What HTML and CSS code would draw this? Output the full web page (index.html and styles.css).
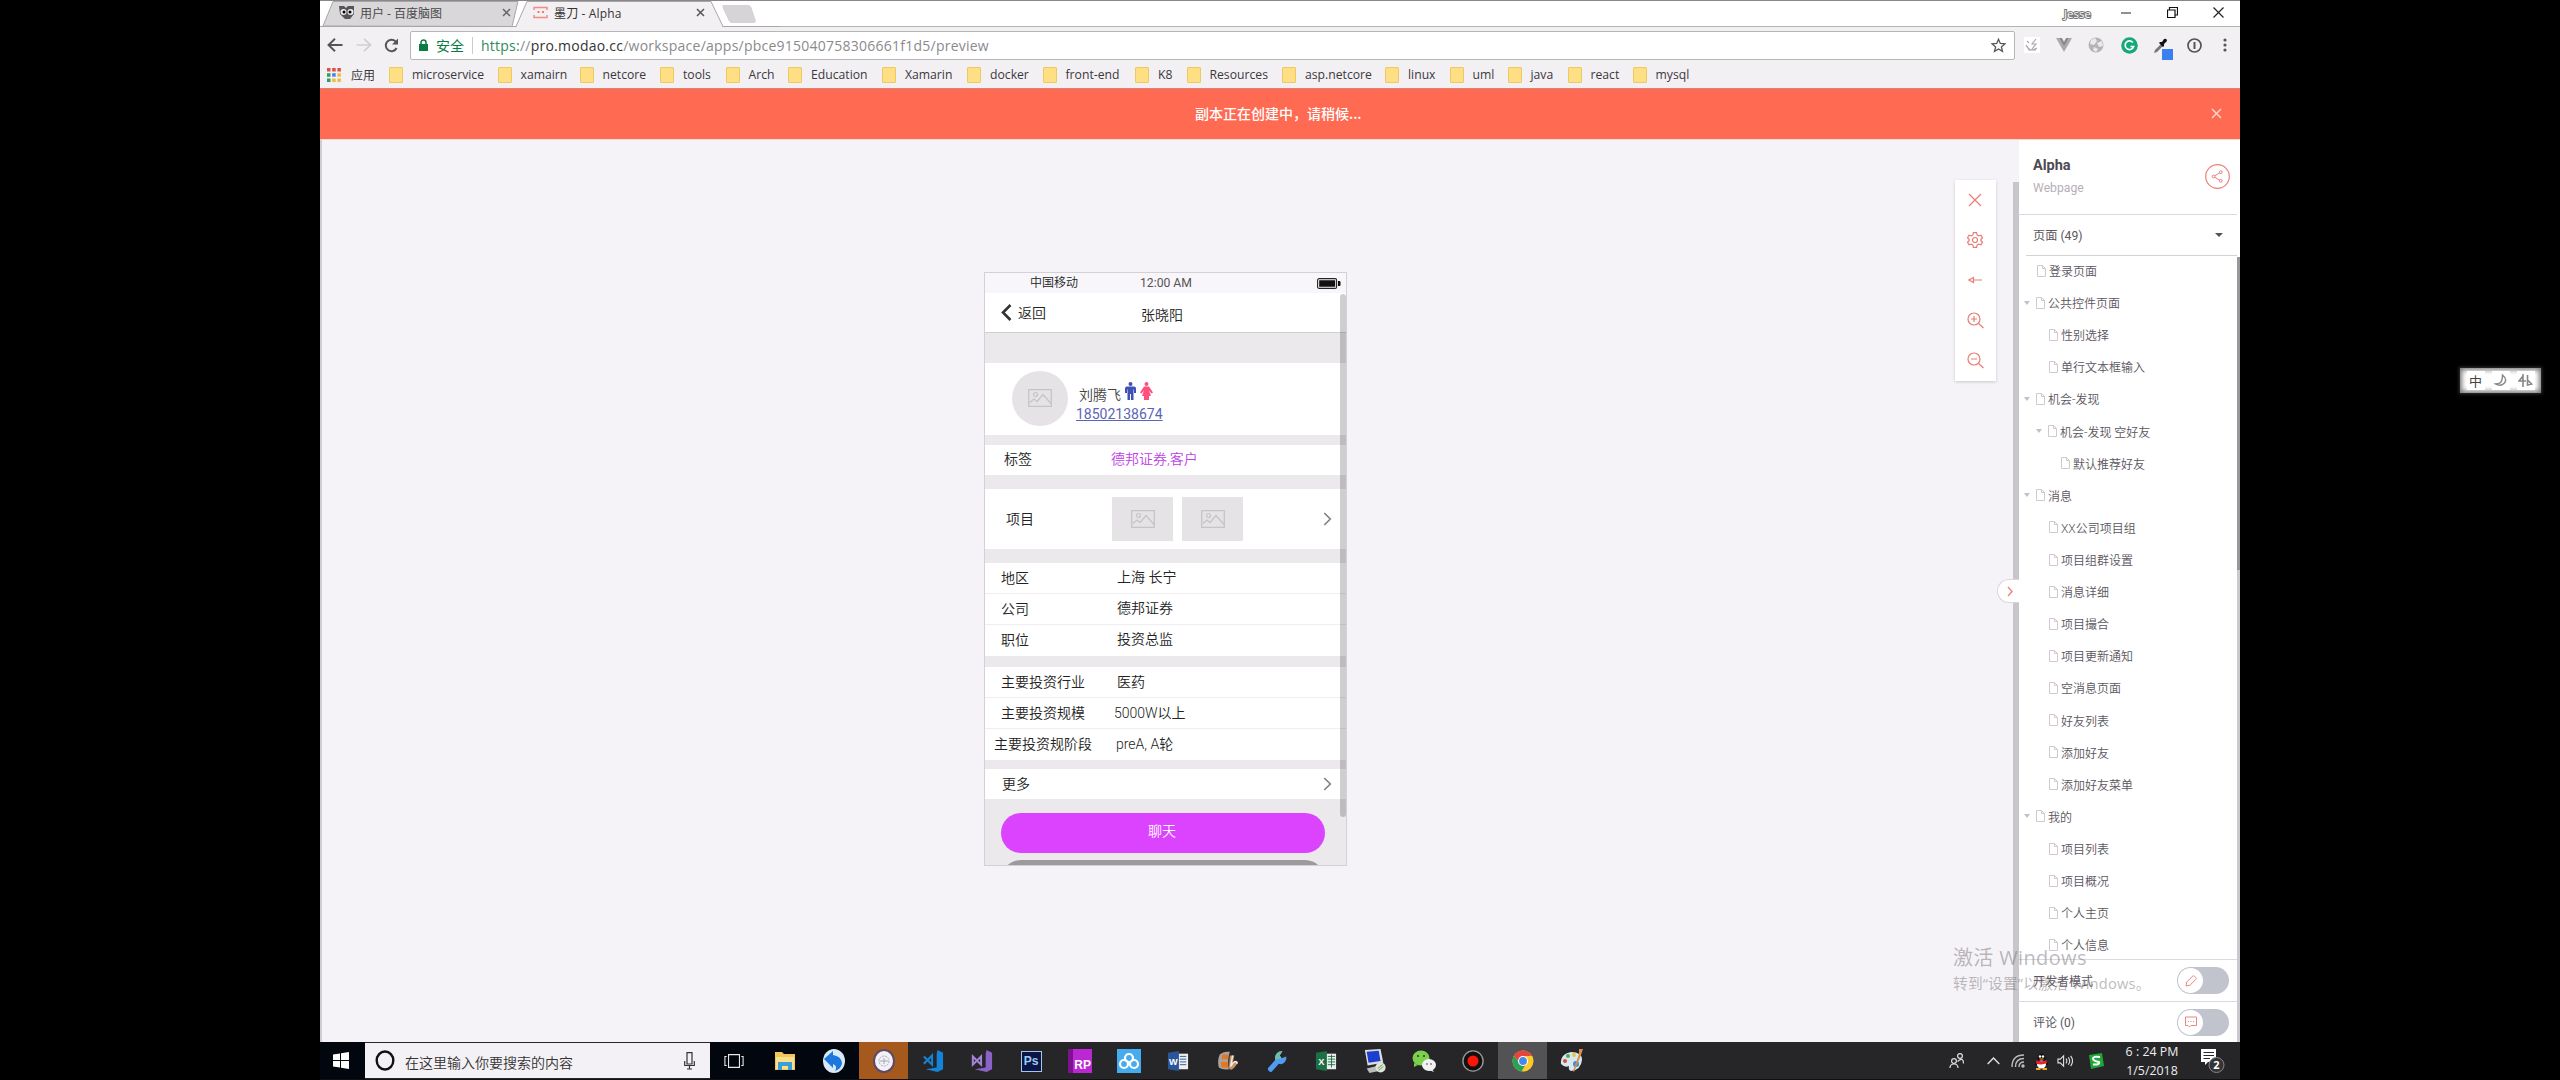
FILE: index.html
```html
<!DOCTYPE html>
<html lang="zh-CN">
<head>
<meta charset="utf-8">
<title>墨刀 - Alpha</title>
<link rel="stylesheet" href="styles.css">
</head>
<body>
<svg class="defs" width="0" height="0">
  <symbol id="page" viewBox="0 0 9 12"><path d="M.5.5h5l3 3v8h-8z M5.5.5v3h3" fill="none" stroke="#cfc9d2"/></symbol>
  <symbol id="pic" viewBox="0 0 24 18"><path d="M.7.7h22.6v16.6H.7z M2 13.500l4-3.500 3 2.500 6-7 8 9" fill="none" stroke="#c6c4c8" stroke-width="1.3"/><circle cx="7.500" cy="5.500" r="2" fill="none" stroke="#c6c4c8" stroke-width="1.2"/></symbol>
  <symbol id="next" viewBox="0 0 9 14"><path d="M1.3 1l6 6-6 6" fill="none" stroke="#807e83" stroke-width="1.6"/></symbol>
</svg>
<div class="desktop">
<div class="window">
  <header class="tabs">
    <svg class="tabshape" width="460" height="27" viewBox="0 0 460 27">
      <path d="M3 26L13 1.500h185l-6 25z" fill="#d9d7d9" stroke="#a8a6a9"/>
      <path d="M0 26.500h196L207 1.500h184l12 25h57V27H0z" fill="#f3f0f4" stroke="#a8a6a9"/>
      <path d="M197 26.500h205" stroke="#f3f0f4" stroke-width="1.500"/>
      <path d="M403 5.500h25q2 0 3 2l4 12q1 3-1 3h-22q-2 0-3-2l-6-13q0-2 0-2z" fill="#d6d4d6" stroke="#c6c4c7" stroke-width=".6"/>
    </svg>
    <div class="tab first">
      <svg width="16" height="15" viewBox="0 0 16 15"><path d="M0 1h5l2 2 2-2h6v8l-4 5H6L1 9z" fill="#555"/><circle cx="4.500" cy="7" r="3" fill="#eee"/><circle cx="11.500" cy="7" r="3" fill="#eee"/><circle cx="5" cy="7" r="1.500"/><circle cx="11" cy="7" r="1.500"/></svg>
      <span>用户 - 百度脑图</span>
      <svg class="tx" width="9" height="9" viewBox="0 0 9 9"><path d="M1 1l7 7M8 1L1 8" stroke="#666" stroke-width="1.500"/></svg>
    </div>
    <div class="tab second">
      <svg width="15" height="13" viewBox="0 0 15 13"><path d="M1 4V1.500h13V4M1 9v2.500h13V9" fill="none" stroke="#f18d85" stroke-width="1.500"/><path d="M4.500 6h2M9 6h2" stroke="#ef7b72" stroke-width="2"/></svg>
      <span>墨刀 - Alpha</span>
      <svg class="tx" width="9" height="9" viewBox="0 0 9 9"><path d="M1 1l7 7M8 1L1 8" stroke="#555" stroke-width="1.500"/></svg>
    </div>
    <div class="winctl">
      <span class="user">Jesse</span>
      <svg width="11" height="11" viewBox="0 0 11 11"><path d="M0 6h10" stroke="#222"/></svg>
      <svg width="11" height="11" viewBox="0 0 11 11"><path d="M.5 3h7.500v7.500H.5zM2.500 3V.5h8V8H8" fill="none" stroke="#111" stroke-width="1.200"/></svg>
      <svg width="11" height="11" viewBox="0 0 11 11"><path d="M.5.5l10 10M10.500.5l-10 10" stroke="#222" stroke-width="1.200"/></svg>
    </div>
  </header>
  <div class="address">
    <svg width="16" height="14" viewBox="0 0 16 14"><path d="M8 .8L1.500 7 8 13.200M2 7h13.500" fill="none" stroke="#555" stroke-width="1.900"/></svg>
    <svg class="fwd" width="16" height="14" viewBox="0 0 16 14"><path d="M8 .8L14.500 7 8 13.200M14 7H.5" fill="none" stroke="#d0ced1" stroke-width="1.700"/></svg>
    <svg class="reload" width="15" height="15" viewBox="0 0 15 15"><path d="M12.600 10A5.700 5.700 0 1 1 11.500 3.400" fill="none" stroke="#555" stroke-width="2"/><path d="M14 .5v6H8z" fill="#555"/></svg>
    <div class="omni">
      <svg width="9" height="12" viewBox="0 0 9 12"><path d="M0 5h9v7H0z" fill="#0b7a45"/><path d="M2 5V3.500a2.500 2.500 0 0 1 5 0V5" fill="none" stroke="#0b7a45" stroke-width="1.500"/></svg>
      <span class="safe">安全</span><i></i>
      <span class="url"><b>https:</b>//<em>pro.modao.cc</em>/workspace/apps/pbce915040758306661f1d5/preview</span>
      <svg class="star" width="15" height="15" viewBox="0 0 15 15"><path d="M7.500 1.300l1.800 4.200 4.600.4-3.500 3 1.100 4.500-4-2.400-4 2.400 1.100-4.500-3.500-3 4.600-.4z" fill="none" stroke="#555" stroke-width="1.300"/></svg>
    </div>
    <div class="exts">
      <svg width="16" height="16" viewBox="0 0 16 16"><path fill="#fff" d="M0 0h16v16H0z"/><path d="M2 8q4 8 11 3M3 4l2 2M12 2L8 7h4l-4 5M4 13h8" fill="none" stroke="#aaa" stroke-width="1.200"/></svg>
      <svg width="16" height="16" viewBox="0 0 16 16"><path d="M0 1h5l3 6 3-6h5L8 15z" fill="#aaa"/><path d="M3.500 1H6l2 4 2-4h2.500L8 9z" fill="#888"/></svg>
      <svg width="16" height="16" viewBox="0 0 16 16"><circle cx="8" cy="8" r="7.500" fill="#b5b3b6"/><path d="M3 3l4-2 2 3-3 4-4-1zM9 6l5-2 1 5-4 1zM6 10l4 2-2 3-3-2z" fill="#ebe9ec"/></svg>
      <svg width="17" height="17" viewBox="0 0 17 17"><circle cx="8.500" cy="8.500" r="8.300" fill="#15a878"/><path d="M11.800 5.500A4.300 4.300 0 1 0 12.600 9.500H9.500" fill="none" stroke="#fff" stroke-width="1.700"/></svg>
      <svg width="21" height="23" viewBox="0 0 21 23"><path d="M1 16l1-3 6-6 2 2-6 6z" fill="#777"/><path d="M7 5l2 0 2-3q3-1 3 2l-3 3v2l-1 1-4-4z" fill="#111"/><path d="M9 12h11v11H9z" fill="#3b7ff0"/></svg>
      <svg width="15" height="15" viewBox="0 0 15 15"><circle cx="7.500" cy="7.500" r="6.500" fill="none" stroke="#555" stroke-width="1.700"/><path d="M7.500 4v7" stroke="#555" stroke-width="2"/></svg>
      <svg width="4" height="14" viewBox="0 0 4 14"><circle cx="2" cy="2" r="1.600" fill="#555"/><circle cx="2" cy="7" r="1.600" fill="#555"/><circle cx="2" cy="12" r="1.600" fill="#555"/></svg>
    </div>
  </div>
  <nav class="marks">
    <span class="apps"><svg width="14" height="14" viewBox="0 0 14 14"><path d="M0 0h3.500v3.500H0zM5.200 0h3.500v3.500H5.200zM10.400 0h3.500v3.500h-3.500z" fill="#dd5145"/><path d="M0 5.200h3.500v3.500H0zM0 10.400h3.500v3.500H0z" fill="#2c9e60"/><path d="M5.200 5.200h3.500v3.500H5.200z" fill="#4486e8"/><path d="M10.400 5.200h3.500v3.500h-3.500zM5.200 10.400h3.500v3.500H5.200zM10.400 10.400h3.500v3.500h-3.500z" fill="#eebc3f"/></svg>应用</span>
    <span>microservice</span><span>xamairn</span><span>netcore</span><span>tools</span><span>Arch</span><span>Education</span><span>Xamarin</span><span>docker</span><span>front-end</span><span>K8</span><span>Resources</span><span>asp.netcore</span><span>linux</span><span>uml</span><span>java</span><span>react</span><span>mysql</span>
  </nav>
  <div class="notice"><span>副本正在创建中，请稍候...</span><svg width="11" height="11" viewBox="0 0 11 11"><path d="M1 1l9 9M10 1l-9 9" stroke="#ffd3ca" stroke-width="1.500"/></svg></div>
  <main class="work">
    <section class="canvas">
      <div class="phone">
        <div class="status"><span class="carrier">中国移动</span><span class="time">12:00 AM</span><svg width="24" height="11" viewBox="0 0 24 11"><rect x=".6" y=".6" width="19" height="9.800" rx="1.500" fill="none" stroke="#222" stroke-width="1.100"/><path d="M2.200 2.200h16v6.600h-16zM21 3h1.500q1 0 1 1v3q0 1-1 1H21z" fill="#111"/></svg></div>
        <div class="nav"><svg width="11" height="17" viewBox="0 0 11 17"><path d="M9.500 1L2 8.500 9.500 16" fill="none" stroke="#333" stroke-width="2.600"/></svg><span class="back">返回</span><span class="title">张晓阳</span></div>
        <div class="profile">
          <div class="avatar"><svg width="24" height="18"><use href="#pic"/></svg></div>
          <div class="who">
            <div class="name">刘腾飞
              <svg class="man" width="11" height="18" viewBox="0 0 11 18"><circle cx="5.500" cy="2" r="2" fill="#3f51b5"/><path d="M2 4.500h7q2 0 2 2V11H9V7.500h-.5V18H6v-6H5v6H2.500V7.500H2V11H0V6.500q0-2 2-2z" fill="#3f51b5"/></svg>
              <svg width="13" height="18" viewBox="0 0 13 18"><circle cx="6.500" cy="2" r="2" fill="#ff4f7d"/><path d="M4 4.500h5l4 6-1.500 1-2.500-3 2 5.500H9V18H4v-4H2l2-5.500-2.500 3L0 10.500z" fill="#ff4f7d"/></svg>
            </div>
            <span class="tel">18502138674</span>
          </div>
        </div>
        <div class="row tag"><span>标签</span><span>德邦证券,客户</span></div>
        <div class="row proj"><span>项目</span><div class="thumb"><svg width="24" height="18"><use href="#pic"/></svg></div><div class="thumb"><svg width="24" height="18"><use href="#pic"/></svg></div><svg class="go" width="9" height="14"><use href="#next"/></svg></div>
        <div class="group one">
          <div class="row"><span>地区</span><span>上海 长宁</span></div>
          <div class="row"><span>公司</span><span>德邦证券</span></div>
          <div class="row"><span>职位</span><span>投资总监</span></div>
        </div>
        <div class="group two">
          <div class="row"><span>主要投资行业</span><span>医药</span></div>
          <div class="row scale"><span>主要投资规模</span><span>5000W以上</span></div>
          <div class="row stage"><span>主要投资规阶段</span><span>preA, A轮</span></div>
        </div>
        <div class="row more"><span>更多</span><svg class="go" width="9" height="14"><use href="#next"/></svg></div>
        <div class="chat">聊天</div>
        <div class="second-btn"></div>
        <div class="pscroll"></div>
      </div>
      <div class="tools">
        <svg width="14" height="14" viewBox="0 0 14 14"><path d="M1 1l12 12M13 1L1 13"/></svg>
        <svg width="16" height="16" viewBox="0 0 16 16"><path d="M6.400.7h3.200l.5 2.200 1.600.9 2.200-.7 1.600 2.700L13.900 7.300v1.400l1.600 1.500-1.600 2.700-2.200-.7-1.600.9-.5 2.200H6.400l-.5-2.200-1.600-.9-2.200.7L.5 10.200l1.600-1.500V7.300L.5 5.800l1.600-2.700 2.200.7 1.600-.9z"/><circle cx="8" cy="8" r="2.500"/></svg>
        <svg width="14" height="8" viewBox="0 0 14 8"><path d="M5.500 1.500v5L1 4zM5.500 4H14"/></svg>
        <svg width="17" height="17" viewBox="0 0 17 17"><circle cx="7" cy="7" r="6"/><path d="M11.500 11.500l5 4.500M4 7h6M7 4v6"/></svg>
        <svg width="17" height="17" viewBox="0 0 17 17"><circle cx="7" cy="7" r="6"/><path d="M11.500 11.500l5 4.500M4 7h6"/></svg>
      </div>
      <div class="strip"></div>
      <div class="handle"><svg width="6" height="11" viewBox="0 0 6 11"><path d="M1 1l4 4.500L1 10" fill="none" stroke="#e98b86" stroke-width="1.500"/></svg></div>
    </section>
    <aside class="side">
      <div class="head"><div><h1>Alpha</h1><p>Webpage</p></div><svg width="25" height="25" viewBox="0 0 25 25" fill="none" stroke="#ea7f7a"><circle cx="12.500" cy="12.500" r="11.800" stroke-width="1.200"/><path d="M9.800 11.800l4.700-3M9.800 13.200l4.700 3"/><circle cx="8.500" cy="12.500" r="1.400"/><circle cx="15.800" cy="8.200" r="1.400"/><circle cx="15.800" cy="16.800" r="1.400"/></svg></div>
      <div class="pages"><span>页面 (49)</span><i></i></div>
      <ul class="tree">
        <li><svg><use href="#page"/></svg>登录页面</li>
        <li class="open"><svg><use href="#page"/></svg>公共控件页面</li>
        <li class="l1"><svg><use href="#page"/></svg>性别选择</li>
        <li class="l1"><svg><use href="#page"/></svg>单行文本框输入</li>
        <li class="open"><svg><use href="#page"/></svg>机会-发现</li>
        <li class="l1 open"><svg><use href="#page"/></svg>机会-发现 空好友</li>
        <li class="l2"><svg><use href="#page"/></svg>默认推荐好友</li>
        <li class="open"><svg><use href="#page"/></svg>消息</li>
        <li class="l1"><svg><use href="#page"/></svg>XX公司项目组</li>
        <li class="l1"><svg><use href="#page"/></svg>项目组群设置</li>
        <li class="l1"><svg><use href="#page"/></svg>消息详细</li>
        <li class="l1"><svg><use href="#page"/></svg>项目撮合</li>
        <li class="l1"><svg><use href="#page"/></svg>项目更新通知</li>
        <li class="l1"><svg><use href="#page"/></svg>空消息页面</li>
        <li class="l1"><svg><use href="#page"/></svg>好友列表</li>
        <li class="l1"><svg><use href="#page"/></svg>添加好友</li>
        <li class="l1"><svg><use href="#page"/></svg>添加好友菜单</li>
        <li class="open"><svg><use href="#page"/></svg>我的</li>
        <li class="l1"><svg><use href="#page"/></svg>项目列表</li>
        <li class="l1"><svg><use href="#page"/></svg>项目概况</li>
        <li class="l1"><svg><use href="#page"/></svg>个人主页</li>
        <li class="l1"><svg><use href="#page"/></svg>个人信息</li>
      </ul>
      <div class="opt"><span>开发者模式</span><div class="switch"><div><svg width="12" height="12" viewBox="0 0 12 12"><path d="M1 11l.8-4L7.500 1.200q1-.8 2 0l1.200 1.300q.8 1 0 2L5 10.200z" fill="none" stroke="#ea8580"/></svg></div></div></div>
      <div class="opt"><span>评论 (0)</span><div class="switch"><div><svg width="12" height="12" viewBox="0 0 12 12"><path d="M.5 1h11v8.500H6L4.500 11 3 9.500H.5z" fill="none" stroke="#ea8580"/><path d="M3 5.500h1M5.500 5.500h1M8 5.500h1" stroke="#ea8580"/></svg></div></div></div>
      <div class="sscroll"></div>
    </aside>
    <div class="watermark"><strong>激活 Windows</strong><span>转到“设置”以激活 Windows。</span></div>
  </main>
  <footer class="taskbar">
    <div class="start"><svg width="16" height="17" viewBox="0 0 16 17"><path d="M0 2.500l7-1V8H0zM8 1.300L16 0v8H8zM0 9h7v6.500l-7-1zM8 9h8v8l-8-1.300z" fill="#fff"/></svg></div>
    <div class="search"><svg width="20" height="21" viewBox="0 0 20 21"><ellipse cx="10" cy="10.500" rx="8.300" ry="9" fill="none" stroke="#111" stroke-width="2.400"/></svg><span>在这里输入你要搜索的内容</span><svg width="11" height="18" viewBox="0 0 11 18"><path d="M3 .7h5V12H3zM.7 9v4.500h9.600V9M5.500 13.500V17M3 17h5" fill="none" stroke="#333" stroke-width="1.200"/></svg></div>
    <div class="icons">
      <div><svg viewBox="0 0 22 22"><path d="M5 4h12v14H5zM3 6H1v10h2M19 6h2v10h-2" fill="none" stroke="#e8e8e8" stroke-width="1.200"/></svg></div>
      <div><svg viewBox="0 0 22 22"><path d="M1 2h7l2 2h11v16H1z" fill="#f1c65b"/><path d="M2 7h18v12H2z" fill="#fbe08b"/><path d="M4 20v-8h14v8h-4v-4H8v4z" fill="#3a9fd6"/></svg></div>
      <div><svg viewBox="0 0 22 24" preserveAspectRatio="none"><ellipse cx="11" cy="12" rx="11" ry="12" fill="#d8e9f8"/><path d="M1 10L10 2v4q8 1 9 8 0 5-7 8 3-5-2-7v4z" fill="#1c78dc"/></svg></div>
      <div class="hot"><svg viewBox="0 0 22 24"><ellipse cx="11" cy="12" rx="10" ry="11" fill="#f3f1f5" stroke="#5b4a6c" stroke-width="2"/><circle cx="11" cy="12" r="5" fill="none" stroke="#aab" stroke-dasharray="2 1"/><path d="M7 12h8M11 9v6" stroke="#9ab"/></svg></div>
      <div><svg viewBox="0 0 24 24"><path d="M17 0l6 3v18l-6 3L4 21l12-2V4z" fill="#1684d6"/><path d="M2 7l9 9V6l-9 9" fill="none" stroke="#1684d6" stroke-width="2.200"/></svg></div>
      <div><svg viewBox="0 0 24 24"><path d="M17 0l6 3v18l-6 3L4 21l12-2V4z" fill="#8a62c8"/><path d="M2 7v9l9-9v9z" fill="none" stroke="#a384d8" stroke-width="2.200"/></svg></div>
      <div><b class="ps">Ps</b></div>
      <div><b class="rp">RP</b></div>
      <div><svg class="wide" viewBox="0 0 24 24"><path d="M0 0h24v24H0z" fill="#45acf0"/><g fill="none" stroke="#fff" stroke-width="2.200"><circle cx="12" cy="9" r="4"/><circle cx="7" cy="15" r="4"/><circle cx="17" cy="15" r="4"/></g></svg></div>
      <div><svg viewBox="0 0 24 24"><path d="M12 4h11v17H12z" fill="#eee"/><path d="M14 7h7M14 10h7M14 13h7M14 16h7" stroke="#2a5699"/><path d="M1 3l12-2v22L1 21z" fill="#2a5699"/><text x="7" y="16" text-anchor="middle" class="gl">W</text></svg></div>
      <div><svg viewBox="0 0 24 24"><path d="M3 5q4-4 11-3-3 9-1 19-7 1-11-2-2-7 1-14z" fill="#a8a39c"/><path d="M6 5h6v5H5zM4 13h8v6H5z" fill="#e47722"/><path d="M14 6h5l-2 9q5-6 6-1l-4 5q-5 5-6 0z" fill="#c89461"/><path d="M17 6l-2 12q5-9 7-3" fill="none" stroke="#eee" stroke-width="1.500"/></svg></div>
      <div><svg viewBox="0 0 24 24"><path d="M2 20l8-9q-1-6 4-9l4-1-3 5 2 3 5-2q1 5-4 8-2 1-4 0l-8 9q-4 0-4-4z" fill="#4f9cf0"/><path d="M10 11q-1-6 4-9l4-1-3 5 2 3" fill="#6fbfa5"/></svg></div>
      <div><svg viewBox="0 0 24 24"><path d="M12 4h11v17H12z" fill="#eee"/><path d="M14 7h8M14 10h8M14 13h8M14 16h8M18 5v14" stroke="#1d7044"/><path d="M1 3l12-2v22L1 21z" fill="#1d7044"/><text x="7" y="16" text-anchor="middle" class="gl">X</text></svg></div>
      <div><svg class="wide" viewBox="0 0 24 26"><path d="M1 1l17-1 3 15-17 3z" fill="#ddd"/><path d="M3 3l13-1 2 11-13 2z" fill="#1c3fd2"/><path d="M3 21l13-3 4 5-14 3z" fill="#bbb"/><circle cx="18" cy="20" r="5.500" fill="#dfe3da"/><path d="M15 21l5-4M16 23l5-4" stroke="#56a545"/></svg></div>
      <div><svg class="wide" viewBox="0 0 24 24"><path d="M2 14l0 4 4-2z" fill="#7bd14b"/><ellipse cx="9" cy="9" rx="8.500" ry="7.500" fill="#7bd14b"/><ellipse cx="17" cy="16" rx="7" ry="6" fill="#f2f2f2"/><path d="M20 20l2 3-5-2z" fill="#f2f2f2"/><g fill="#333"><circle cx="6" cy="7" r="1"/><circle cx="12" cy="7" r="1"/><circle cx="15" cy="15" r=".8"/><circle cx="19" cy="15" r=".8"/></g></svg></div>
      <div><svg viewBox="0 0 24 24"><circle cx="12" cy="12" r="11" fill="#111" stroke="#999" stroke-width="1.500"/><circle cx="12" cy="12" r="6" fill="#fa1608"/></svg></div>
      <div class="active"><svg viewBox="0 0 24 24"><circle cx="12" cy="12" r="11.500" fill="#fbc92c"/><path d="M2 6.300A11.500 11.500 0 0 1 22 6.300L12 7 8 14z" fill="#e2473b"/><path d="M2 6.300a11.500 11.500 0 0 0 8.500 17l5-8.500L8 14z" fill="#2aa255"/><circle cx="12" cy="12" r="5.500" fill="#fff"/><circle cx="12" cy="12" r="4.300" fill="#4a86ee"/></svg></div>
      <div><svg class="wide" viewBox="0 0 24 24"><path d="M1 15Q0 5 11 3q11 0 11 8-1 10-11 11-3-1-2-5-4 2-8-2z" fill="#d8e6ee"/><circle cx="5" cy="12" r="2" fill="#d3503c"/><circle cx="8" cy="7" r="2" fill="#4cae50"/><circle cx="14" cy="6" r="2" fill="#e9c43e"/><circle cx="16" cy="15" r="3" fill="#3d8bd3"/><path d="M19 0h4l-2 6-7 17-1-1 6-17z" fill="#d6904a"/></svg></div>
    </div>
    <div class="tray">
      <svg width="16" height="16" viewBox="0 0 16 16" fill="none" stroke="#ddd" stroke-width="1.200"><circle cx="11" cy="3" r="2.400"/><circle cx="5" cy="8" r="2.400"/><path d="M1 15q0-4 4-4t4 4M8.500 8.500q6-5 6 2"/></svg>
      <svg width="13" height="8" viewBox="0 0 13 8"><path d="M.7 7l5.800-6 5.800 6" fill="none" stroke="#ddd" stroke-width="1.500"/></svg>
      <svg width="14" height="14" viewBox="0 0 14 14" fill="none" stroke="#bbb" stroke-width="1.400"><path d="M1 13Q1 1 13 1M4.500 13q0-8.500 8.500-8.500M8 13q0-5 5-5"/><circle cx="12" cy="12" r="1" fill="#fff"/></svg>
      <svg width="15" height="17" viewBox="0 0 15 17"><ellipse cx="7.500" cy="5.500" rx="4" ry="5" fill="#111"/><path d="M3 7L.5 12l2 0h10l2 0L12 7z" fill="#111"/><ellipse cx="7.500" cy="11.500" rx="4.500" ry="4" fill="#fff"/><path d="M2.500 7q5 2.500 10 0l.5 3q-5.500 2.500-11 .5z" fill="#e5202a"/><path d="M2 16h4.500M8.500 16H13" stroke="#f2a427" stroke-width="2"/><circle cx="6" cy="3.500" r="1.200" fill="#fff"/><circle cx="9" cy="3.500" r="1.200" fill="#fff"/><path d="M5.500 6h4" stroke="#f2a427"/></svg>
      <svg width="16" height="14" viewBox="0 0 17 14" fill="none" stroke="#ddd" stroke-width="1.200"><path d="M1 5h2.500L7 1.500v11L3.500 9H1zM9.500 4.500q2 2.500 0 5M12 3q3 4 0 8M14.500 1.500q4 5.500 0 11"/></svg>
      <svg width="16" height="16" viewBox="0 0 16 16"><path d="M1 2l13-2 2 13-13 3z" fill="#1fa63a"/><path d="M12 4Q5 3 5 5.500T11 9q1 3-6 2.500" fill="none" stroke="#fff" stroke-width="2"/></svg>
      <div class="clock"><span>6 : 24 PM</span><span>1/5/2018</span></div>
      <svg width="25" height="24" viewBox="0 0 25 24"><path d="M1 0h15v13H8l-3 3v-3H1z" fill="#fff"/><path d="M3.500 3.500H14M3.500 6.500H14M3.500 9.500H10" stroke="#262528" stroke-width="1.200"/><circle cx="16.500" cy="16" r="7.500" fill="#343336" stroke="#888"/><text x="16.500" y="20" text-anchor="middle" class="bd">2</text></svg>
    </div>
  </footer>
</div>
<div class="ime"><b>中</b><b><svg width="13" height="13" viewBox="0 0 13 13"><path d="M8.500 1q5 4 2 8-4 4-9 1 5 0 6-3 1-2 1-6z" fill="none" stroke="#888" stroke-width="1.400"/></svg></b><b><svg width="15" height="15" viewBox="0 0 15 15"><path d="M5 1v13M5 3L1 8h7M9.500 2v10l4-1-4-4" fill="none" stroke="#888" stroke-width="1.600"/></svg></b></div>
</div>
</body>
</html>
```
FILE: styles.css
```css
* { box-sizing: border-box; }
body { margin: 0; background: #000; font-family: "Open Sans", "Noto Sans CJK SC", sans-serif; font-size: 12px; }
svg { display: block; flex: none; }
.defs { position: absolute; }
.desktop { position: relative; width: 2560px; height: 1080px; overflow: hidden; padding-left: 320px; }
.window { width: 1920px; height: 1080px; display: flex; flex-direction: column; background: #f3f0f4; }

.tabs { position: relative; height: 27px; flex: none; background: #fff; border-top: 1px solid #888; border-bottom: 1px solid #b4b2b5; display: flex; align-items: center; }
.tabshape { position: absolute; left: 0; top: -1px; }
.tab { position: relative; display: flex; align-items: center; height: 25px; padding-bottom: 2px; color: #333; white-space: nowrap; }
.tab .tx { margin-left: auto; }
.tab.first { width: 172px; margin-left: 19px; gap: 5px; color: #4a4a4a; }
.tab.second { width: 172px; margin-left: 22px; gap: 6px; letter-spacing: .15px; }
.winctl { margin-left: auto; display: flex; align-items: center; margin-right: 16px; gap: 35px; height: 23px; padding-bottom: 2px; }
.user { font-size: 11.500px; color: #fff; -webkit-text-stroke: 2px #777; paint-order: stroke; margin-right: -5px; padding-top: 2px; }

.address { height: 34px; flex: none; display: flex; align-items: center; padding: 2px 0 0 7px; }
.fwd { margin-left: 13px; }
.reload { margin-left: 12px; margin-right: 11px; }
.omni { width: 1605px; flex: none; height: 29px; border: 1px solid #b7b5b8; border-radius: 2px; background: #fff; display: flex; align-items: center; padding: 0 13px 0 8px; font-size: 14px; white-space: nowrap; }
.safe { color: #0b7a45; margin-left: 8px; }
.omni i { width: 1px; height: 17px; background: #ccc; margin: 0 8px; }
.url { color: #8b898d; font-size: 14px; letter-spacing: .24px; }
.url b { font-weight: 400; color: #2f8a5b; }
.url em { font-style: normal; color: #333; }
.star { margin-left: auto; margin-right: -5px; }
.exts { flex: none; display: grid; grid-template-columns: 32px 32px 32px 34px 34px 28px 34px; justify-items: center; align-items: center; margin-left: 1px; }
.exts svg:nth-child(5) { margin-top: 6px; }

.marks { height: 27px; flex: none; display: grid; grid-template-columns: 62px 108.500px 82px 80.500px 65.500px 62.500px 94px 85px 75.500px 92.500px 51.500px 95.500px 103px 64.500px 58px 60px 65px 80px; align-items: center; padding-left: 7px; font-size: 12.200px; color: #3b383d; white-space: nowrap; }
.marks span { display: flex; align-items: center; gap: 9px; }
.marks span:not(.apps)::before { content: ""; width: 12px; height: 14px; background: #ffdf84; border: 1px solid #ecc962; border-radius: 1px; }
.marks .apps { font-size: 12px; gap: 10px; }

.notice { height: 51px; flex: none; background: #ff6a52; border-top: 1px solid #d98376; display: flex; align-items: center; justify-content: flex-end; padding: 0 18px 2px 0; color: #fff; font-size: 14px; font-weight: 500; font-family: "Noto Sans CJK SC", sans-serif; }
.notice span { margin-right: auto; margin-left: 875px; }

.work { position: relative; height: 903px; flex: none; display: flex; border-left: 2px solid #cfcdd1; border-top: 1px solid #f7d8d5; background: #f5f3f7; }
.canvas { position: relative; flex: 1; display: flex; align-items: flex-start; }
.phone { position: relative; width: 363px; height: 594px; margin: 132px 0 0 662px; border: 1px solid #d3d1d5; background: #ebe9ec; overflow: hidden; font-family: Roboto, "Noto Sans CJK SC", sans-serif; font-size: 14px; font-weight: 350; line-height: 20px; color: #222; display: flex; flex-direction: column; white-space: nowrap; }
.phone > div { flex: none; }
.status { height: 20px; background: #f8f6fa; display: flex; align-items: center; font-size: 12px; }
.carrier { margin-left: 45px; width: 110px; }
.time { color: #555; width: 177px; font-size: 12.200px; font-weight: 400; }
.nav { height: 40px; background: #fff; border-bottom: 1px solid #d0ced2; display: flex; align-items: center; padding-left: 16px; }
.back { margin-left: 6px; width: 123px; padding-top: 1px; }
.title { padding-top: 4px; }
.profile { height: 72px; margin-top: 30px; background: #fff; display: flex; align-items: center; padding-left: 27px; }
.avatar { width: 56px; height: 55px; border-radius: 50%; background: #e5e3e6; display: grid; place-items: center; margin-bottom: 2px; }
.who { margin-left: 8px; padding-top: 11px; }
.name { display: flex; align-items: center; padding-left: 3px; height: 18px; color: #444; }
.name svg { margin-bottom: 8px; }
.name .man { margin: 0 4px 8px 4px; }
.tel { display: block; color: #5a66b4; font-weight: 400; text-decoration: underline; line-height: 20px; }
.row { background: #fff; display: flex; align-items: center; height: 31px; border-bottom: 1px solid #efedf0; padding-left: 16px; }
.row span:first-child { width: 116px; }
.row.tag { margin-top: 10px; height: 30px; border: 0; padding-left: 19px; padding-bottom: 2px; }
.row.tag span:first-child { width: 107px; }
.row.tag span:last-child { color: #bd3fe6; }
.row.proj { margin-top: 14px; height: 60px; border: 0; padding-left: 21px; }
.row.proj span:first-child { width: 106px; }
.thumb { width: 61px; height: 44px; margin-right: 9px; background: #e5e3e6; display: grid; place-items: center; }
.go { margin-left: auto; margin-right: 14px; }
.group.one { margin-top: 14px; }
.group .row:last-child { border-bottom-color: #fff; }
.group.one span:last-child { padding-bottom: 3px; }
.group.two { margin-top: 11px; }
.scale span:last-child { margin-left: -3px; }
.row.stage { padding-left: 9px; }
.row.stage span:first-child { width: 122px; }
.row.more { margin-top: 9px; height: 30px; border: 0; padding-left: 17px; }
.chat { width: 324px; height: 40px; margin: 14px 0 0 16px; border-radius: 20px; background: #db43ff; color: #fff; display: grid; place-items: center; padding: 0 2px 5px 0; }
.second-btn { width: 324px; height: 40px; margin: 7px 0 0 16px; border-radius: 20px; background: #9c9a9d; }
.pscroll { position: absolute; right: 0; top: 21px; width: 6px; height: 523px; border-radius: 3px; background: rgba(60, 55, 65, .25); }

.tools { position: absolute; left: 1633px; top: 40px; width: 41px; height: 201px; background: #fff; box-shadow: 0 1px 3px rgba(0, 0, 0, .18); display: grid; grid-template-rows: repeat(5, 40px); place-items: center; padding-right: 1px; }
.tools svg { fill: none; stroke: #e87d76; stroke-width: 1.200; }
.strip { position: absolute; right: 0; top: 42px; bottom: 0; width: 6px; background: #c9c6cb; }
.handle { position: absolute; right: 0; top: 439px; width: 22px; height: 24px; border-radius: 12px 0 0 12px; background: #fff; border: 1px solid #dcd6dc; border-right: 0; display: grid; place-items: center; padding-left: 2px; }

.side { position: relative; width: 221px; height: 902px; background: #fff; font-family: Roboto, "Noto Sans CJK SC", sans-serif; color: #5b5660; display: flex; flex-direction: column; }
.head { height: 75px; flex: none; border-bottom: 1px solid #dcd9de; display: flex; justify-content: space-between; align-items: center; padding: 0 10px 2px 14px; }
.head h1 { margin: 0; font-size: 14.500px; line-height: 20px; color: #4d4a52; }
.head p { margin: 3px 0 0; line-height: 18px; color: #b5b0b8; font-size: 12.200px; }
.pages { height: 41px; flex: none; margin-left: 7px; padding: 0 17px 0 7px; border-bottom: 1px solid #d5d2d7; display: flex; align-items: center; justify-content: space-between; font-size: 12.200px; }
.pages i { border: 4px solid transparent; border-top: 4.500px solid #555; border-bottom: 0; }
.tree { list-style: none; margin: -1px 0 0; padding: 0; flex: none; height: 705px; overflow: hidden; border-bottom: 1px solid #dcd9de; }
.tree li { position: relative; height: 32.110px; display: flex; align-items: center; gap: 3px; padding: 0 0 1px 18px; white-space: nowrap; font-weight: 350; }
.tree li svg { width: 9px; height: 12px; }
.tree .l1 { padding-left: 30px; }
.tree .l2 { padding-left: 42px; }
.tree .open { padding-left: 5px; }
.tree .l1.open { padding-left: 17px; }
.tree .open::before { content: ""; border: 3.500px solid transparent; border-top: 4px solid #c5c0c8; border-bottom: 0; margin-right: 3px; }
.opt { height: 41px; flex: none; display: flex; align-items: center; justify-content: space-between; padding: 0 11px 0 14px; }
.opt + .opt { border-top: 1px solid #dcd9de; }
.opt span { padding-bottom: 1px; }
.switch { width: 52px; height: 27px; border-radius: 14px; background: #c1c3cd; padding: 1px; }
.switch div { width: 25px; height: 25px; border-radius: 50%; background: #fff; display: grid; place-items: center; }
.sscroll { position: absolute; right: 0; top: 0; width: 3px; height: 100%; background: linear-gradient(#fff 117px, #98959b 117px, #98959b 430px, #cbc8cd 430px); }
.watermark { position: absolute; left: 1631px; top: 804px; display: flex; flex-direction: column; color: rgba(125, 120, 128, .52); white-space: nowrap; }
.watermark strong { font-weight: 400; font-size: 20px; line-height: 28px; letter-spacing: .35px; }
.watermark span { font-size: 14.700px; line-height: 22px; letter-spacing: .2px; }

.taskbar { height: 38px; flex: none; background: #262528; display: flex; border-bottom: 1px solid #111; }
.start { width: 45px; background: #02060f; display: grid; place-items: center; padding-right: 4px; }
.search { width: 345px; margin: 1px 0; background: #f3f1f5; display: flex; align-items: center; padding: 0 15px 0 10px; font-size: 14px; font-family: "Noto Sans CJK SC", sans-serif; font-weight: 350; color: #333; }
.search span { margin: 0 auto 0 10px; padding-top: 2px; }
.icons { display: grid; grid-template-columns: repeat(18, 49.170px); padding-left: 1.500px; background: linear-gradient(90deg, #02060f 196px, transparent 196px); }
.icons div { display: grid; place-items: center; padding-top: 1px; }
.icons svg { width: 22px; height: 24px; }
.icons svg.wide { width: 24px; }
.icons div:first-child svg { width: 20px; margin-right: 4px; }
.hot { background: #a5591c; }
.active { background: #535255; }
.ps, .rp { width: 21px; height: 21px; font-size: 12px; line-height: 18px; text-align: center; font-family: "Liberation Sans", sans-serif; }
.ps { background: #0b1648; border: 1px solid #a9c6e8; color: #9fcaf5; }
.rp { width: 24px; height: 24px; line-height: 32px; background: linear-gradient(90deg, #7d1190 5px, #bb27d2 5px); color: #fff; padding-left: 5px; }
.gl { font: bold 10px "Liberation Sans", sans-serif; fill: #fff; }
.bd { font: bold 11px "Open Sans", sans-serif; fill: #fff; }
.tray { flex: 1; display: grid; grid-template-columns: 36px 36px 14px 32px 16px 46px 66px 55px; place-items: center; justify-content: end; }
.clock { display: flex; flex-direction: column; align-items: center; color: #eee; font-size: 12.400px; line-height: 18.500px; white-space: nowrap; padding-top: 1px; }

.ime { position: absolute; left: 2460px; top: 368px; width: 81px; height: 25px; background: #fff; box-shadow: inset 0 0 5px 2px #777, 0 0 3px 1px #333; display: flex; align-items: center; justify-content: center; gap: 7px; }
.ime b { width: 18px; height: 19px; background: #fff; display: grid; place-items: center; font-size: 13px; font-weight: 400; color: #444; line-height: 18px; }
```
